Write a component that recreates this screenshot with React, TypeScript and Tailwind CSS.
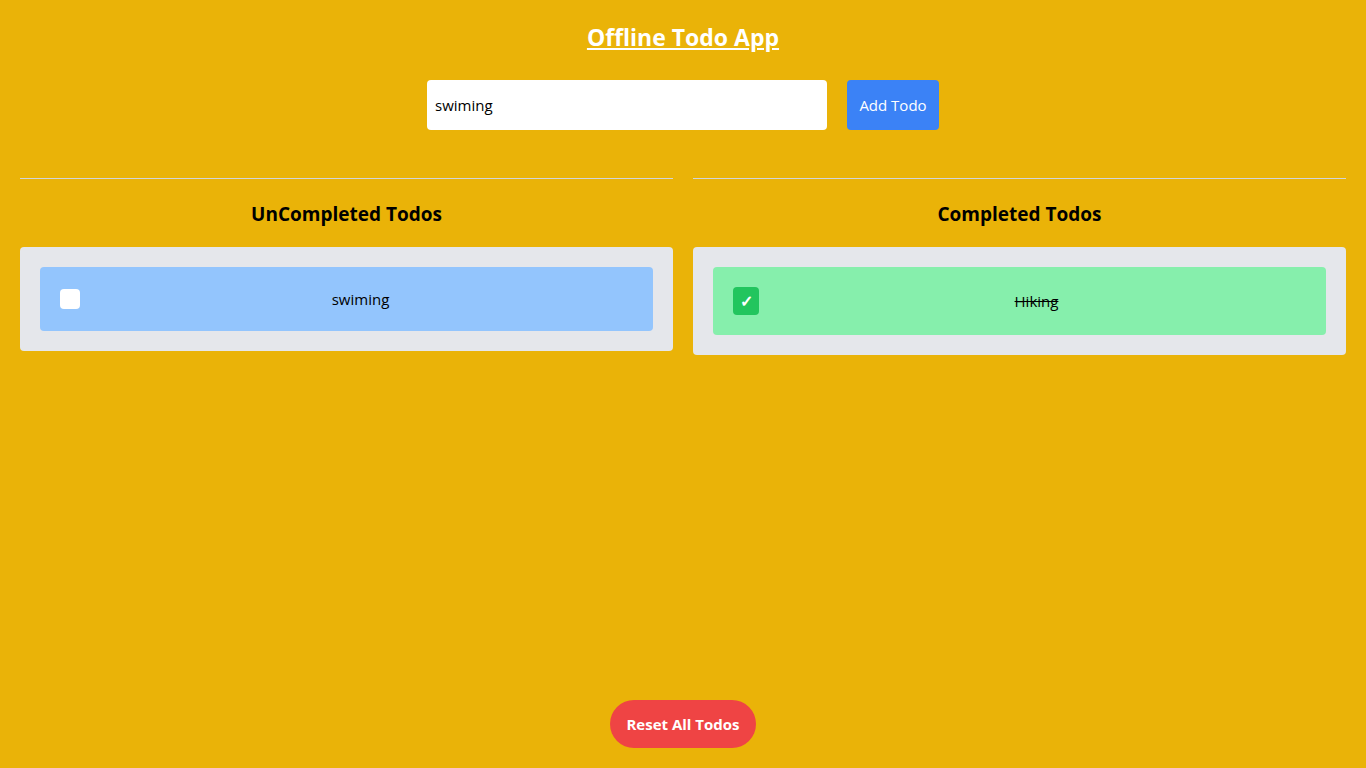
type Todo = {
  id: number;
  text: string;
  done: boolean;
};

const todos: Todo[] = [
  { id: 1, text: "swiming", done: false },
  { id: 2, text: "Hiking", done: true },
];

function TodoItem({ todo }: { todo: Todo }) {
  if (todo.done) {
    return (
      <div className="flex items-center rounded bg-[#86efac] p-5">
        <button className="flex h-7 w-[26px] items-center justify-center rounded bg-[#22c55e] text-base font-semibold leading-none text-white">
          ✓
        </button>
        <p className="ml-2 flex-1 text-center text-[15px] text-black line-through">
          {todo.text}
        </p>
      </div>
    );
  }
  return (
    <div className="flex items-center rounded bg-[#93c5fd] p-5">
      <span className="h-5 w-5 rounded bg-white" />
      <p className="ml-2 flex-1 text-center text-[15px] leading-6 text-black">
        {todo.text}
      </p>
    </div>
  );
}

function TodoColumn({ title, items }: { title: string; items: Todo[] }) {
  return (
    <div className="flex-1">
      <hr className="border-[#d1d5db]" />
      <h2 className="mt-[21px] mb-[19px] text-center text-[19px] leading-7 font-bold text-black">
        {title}
      </h2>
      <div className="flex flex-col gap-3 rounded bg-[#e5e7eb] p-5">
        {items.map((todo) => (
          <TodoItem key={todo.id} todo={todo} />
        ))}
      </div>
    </div>
  );
}

export default function App() {
  return (
    <div
      className="flex min-h-screen flex-col bg-[#eab308] px-5 pt-[21px] pb-5"
      style={{ fontFamily: '"Open Sans", "Noto Sans", sans-serif' }}
    >
      <h1 className="text-center text-[23px] leading-8 font-bold text-white underline">
        Offline Todo App
      </h1>

      <div className="mt-[27px] flex justify-center gap-5">
        <input
          type="text"
          defaultValue="swiming"
          className="h-[50px] w-[400px] rounded bg-white px-2 text-[15px] text-black outline-none"
        />
        <button className="h-[50px] w-[92px] rounded bg-[#3b82f6] text-[15px] text-white">
          Add Todo
        </button>
      </div>

      <div className="mt-12 flex gap-5">
        <TodoColumn
          title="UnCompleted Todos"
          items={todos.filter((t) => !t.done)}
        />
        <TodoColumn
          title="Completed Todos"
          items={todos.filter((t) => t.done)}
        />
      </div>

      <div className="mt-auto flex justify-center">
        <button className="h-12 w-[146px] rounded-full bg-[#ef4444] text-[15px] font-bold text-white">
          Reset All Todos
        </button>
      </div>
    </div>
  );
}
